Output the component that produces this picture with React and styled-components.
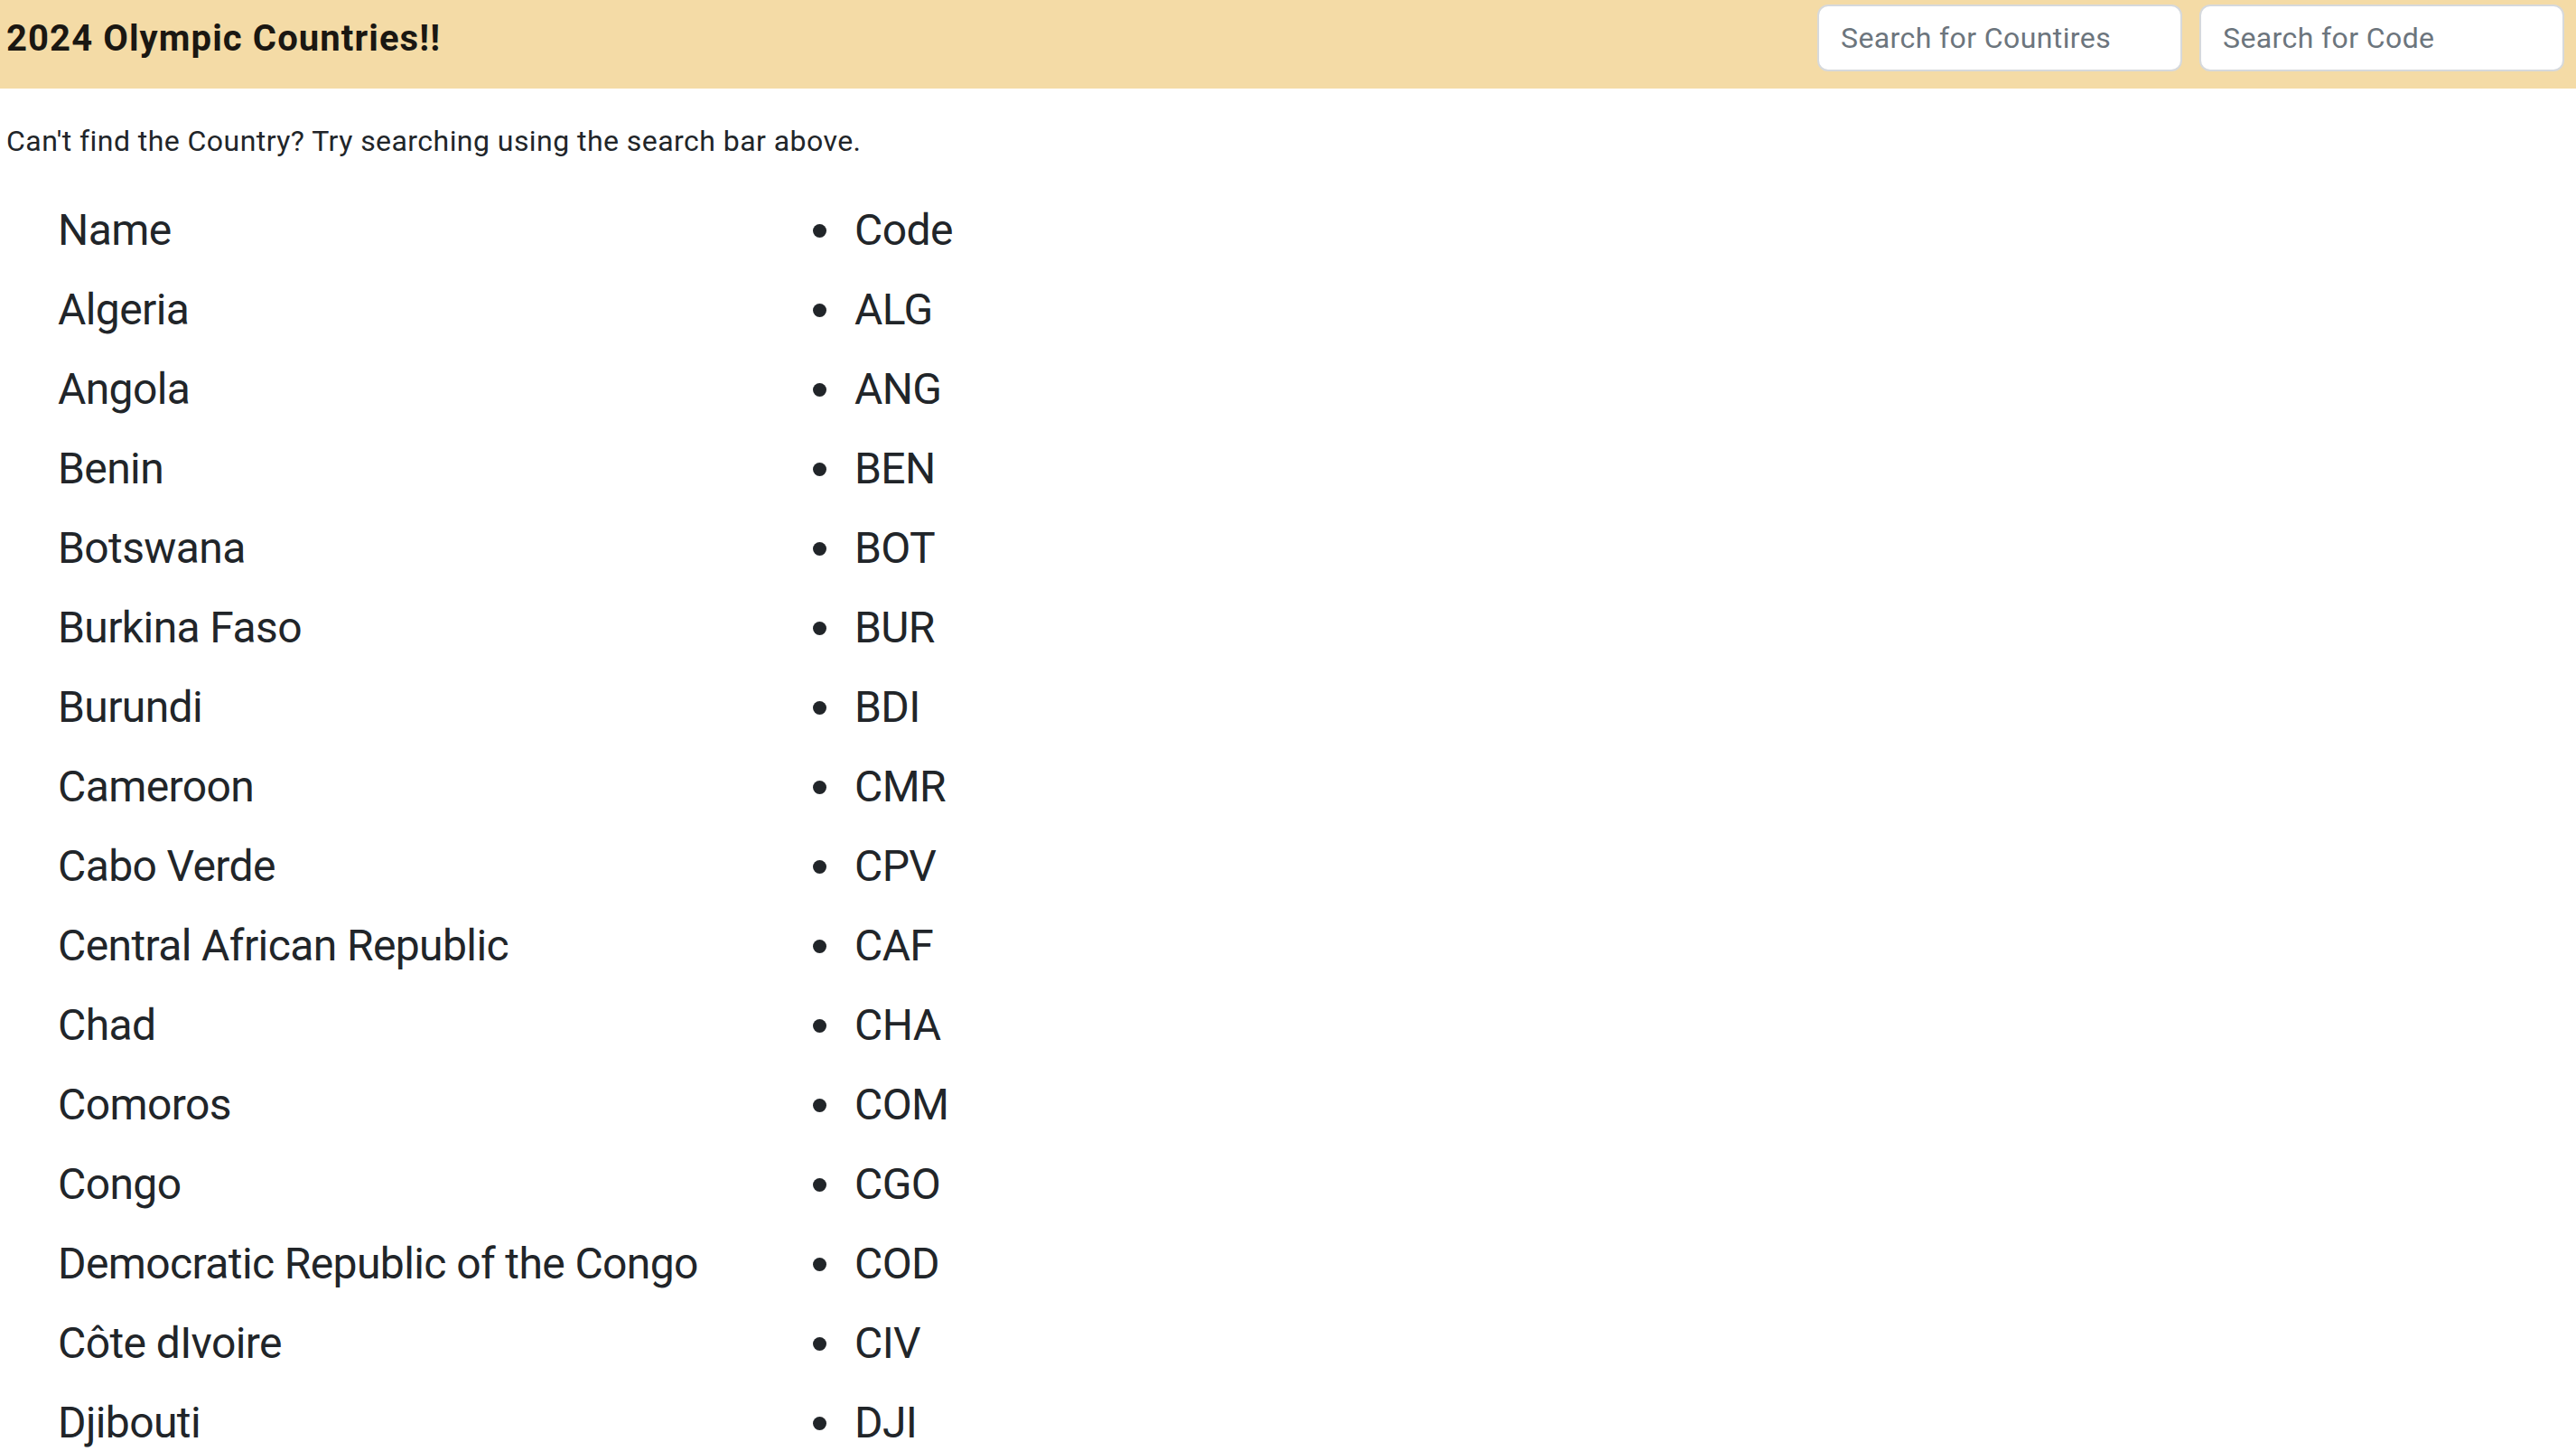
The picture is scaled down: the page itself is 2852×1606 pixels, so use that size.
import React from 'react';
import styled, { createGlobalStyle } from 'styled-components';

const GlobalStyle = createGlobalStyle`
  html, body {
    margin: 0;
    padding: 0;
    overflow: hidden;
    background: #fff;
  }
  body {
    font-family: Roboto, "Noto Sans", sans-serif;
    color: #212529;
  }
`;

const Header = styled.header`
  display: flex;
  justify-content: space-between;
  align-items: flex-start;
  box-sizing: border-box;
  height: 98px;
  padding: 5px 13px 0 7px;
  background-color: #f4dba6;
`;

const Title = styled.h1`
  margin: 0;
  padding-top: 14px;
  font-size: 40px;
  line-height: 48px;
  font-weight: 700;
  letter-spacing: 1.1px;
  color: #1a1712;
`;

const SearchGroup = styled.div`
  display: flex;
  gap: 19px;
`;

const SearchInput = styled.input`
  box-sizing: border-box;
  width: 404px;
  height: 74px;
  padding: 0 24px;
  border: 2px solid #d6d9dc;
  border-radius: 12px;
  background: #fff;
  font-family: Roboto, "Noto Sans", sans-serif;
  font-size: 32px;
  letter-spacing: 0.4px;
  color: #212529;
  outline: none;

  &::placeholder {
    color: #6c757d;
  }
`;

const Main = styled.main`
  padding: 0 7px;
`;

const Notice = styled.p`
  margin: 34px 0 31px;
  font-size: 32px;
  line-height: 48px;
  letter-spacing: 0.45px;
`;

const CountryList = styled.div`
  padding-left: 57px;
`;

const Row = styled.div`
  display: grid;
  grid-template-columns: 836px auto;
  align-items: center;
  height: 88px;
  font-size: 48px;
  line-height: 88px;
  letter-spacing: -0.6px;
`;

const Name = styled.span``;

const Code = styled.span`
  display: flex;
  align-items: center;
  gap: 31px;
`;

const Bullet = styled.span`
  width: 15px;
  height: 15px;
  border-radius: 50%;
  background: #212529;
  flex-shrink: 0;
`;

const countries = [
  ['Name', 'Code'],
  ['Algeria', 'ALG'],
  ['Angola', 'ANG'],
  ['Benin', 'BEN'],
  ['Botswana', 'BOT'],
  ['Burkina Faso', 'BUR'],
  ['Burundi', 'BDI'],
  ['Cameroon', 'CMR'],
  ['Cabo Verde', 'CPV'],
  ['Central African Republic', 'CAF'],
  ['Chad', 'CHA'],
  ['Comoros', 'COM'],
  ['Congo', 'CGO'],
  ['Democratic Republic of the Congo', 'COD'],
  ['Côte dIvoire', 'CIV'],
  ['Djibouti', 'DJI'],
];

function App() {
  return (
    <>
      <GlobalStyle />
      <Header>
        <Title>2024 Olympic Countries!!</Title>
        <SearchGroup>
          <SearchInput type="text" placeholder="Search for Countires" />
          <SearchInput type="text" placeholder="Search for Code" />
        </SearchGroup>
      </Header>
      <Main>
        <Notice>Can't find the Country? Try searching using the search bar above.</Notice>
        <CountryList>
          {countries.map(([name, code]) => (
            <Row key={code}>
              <Name>{name}</Name>
              <Code>
                <Bullet />
                {code}
              </Code>
            </Row>
          ))}
        </CountryList>
      </Main>
    </>
  );
}

export default App;
